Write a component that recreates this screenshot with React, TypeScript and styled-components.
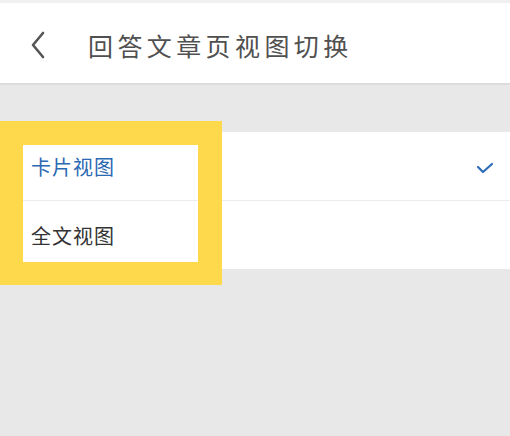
import React from "react";
import styled, { createGlobalStyle } from "styled-components";

const Global = createGlobalStyle`
  html, body { margin: 0; padding: 0; }
  body {
    background: #e8e8e8;
    font-family: "Noto Sans CJK SC", "Noto Sans", sans-serif;
  }
`;

const Page = styled.div`
  position: relative;
  width: 510px;
  height: 436px;
  background: #e8e8e8;
  display: flex;
  flex-direction: column;
  overflow: hidden;
`;

const StatusStrip = styled.div`
  height: 3px;
  background: #eef0f2;
`;

const Header = styled.header`
  height: 82px;
  background: #ffffff;
  display: flex;
  align-items: center;
  padding-left: 30px;
  border-bottom: 2px solid #dcdcdc;
  box-sizing: border-box;
`;

const BackButton = styled.div`
  width: 20px;
  height: 30px;
  display: flex;
  align-items: center;
  margin-right: 38px;
  margin-top: 4px;
`;

const Title = styled.h1`
  margin: 3px 0 0;
  font-family: "Noto Sans CJK SC", sans-serif;
  font-weight: 400;
  font-size: 25px;
  letter-spacing: 4.4px;
  color: #505050;
`;

const List = styled.ul`
  list-style: none;
  margin: 47px 0 0;
  padding: 0;
  background: #ffffff;
`;

const Row = styled.li<{ $last?: boolean }>`
  height: 68px;
  display: flex;
  align-items: center;
  justify-content: space-between;
  padding: 0 16px 0 31px;
  border-bottom: ${(p) => (p.$last ? "none" : "1px solid #ededed")};
`;

const Label = styled.span<{ $active?: boolean }>`
  font-family: "Noto Sans CJK SC", sans-serif;
  font-weight: 400;
  font-size: 20px;
  letter-spacing: 1px;
  color: ${(p) => (p.$active ? "#2a69b3" : "#333333")};
`;

const Check = styled.svg`
  margin-top: 3px;
`;

const Highlight = styled.div`
  position: absolute;
  left: 0;
  top: 121px;
  width: 222px;
  height: 164px;
  box-sizing: border-box;
  border-style: solid;
  border-color: #fdd94b;
  border-width: 24px 24px 23px 23px;
  pointer-events: none;
`;

export default function App() {
  return (
    <Page>
      <Global />
      <StatusStrip />
      <Header>
        <BackButton>
          <svg width="16" height="28" viewBox="0 0 16 28">
            <path
              d="M13 2 L3 14 L13 26"
              fill="none"
              stroke="#555"
              strokeWidth="2.6"
              strokeLinecap="round"
              strokeLinejoin="round"
            />
          </svg>
        </BackButton>
        <Title>回答文章页视图切换</Title>
      </Header>
      <List>
        <Row>
          <Label $active>卡片视图</Label>
          <Check width="18" height="14" viewBox="0 0 18 14">
            <path
              d="M2 6 L7 11 L16 3"
              fill="none"
              stroke="#2d6db6"
              strokeWidth="2.2"
              strokeLinecap="round"
              strokeLinejoin="round"
            />
          </Check>
        </Row>
        <Row $last>
          <Label>全文视图</Label>
        </Row>
      </List>
      <Highlight />
    </Page>
  );
}
